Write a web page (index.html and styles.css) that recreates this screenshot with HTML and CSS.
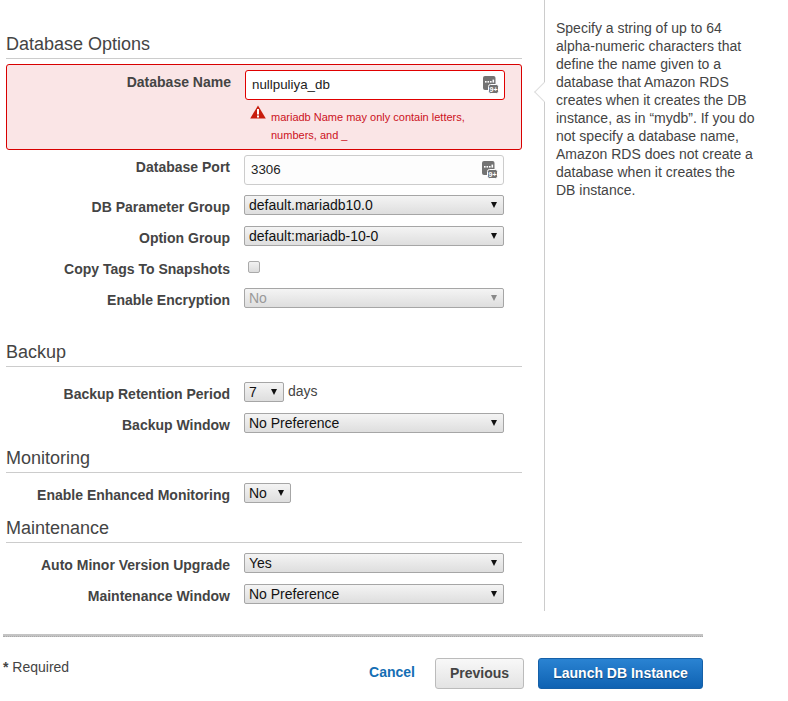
FILE: index.html
```html
<!DOCTYPE html>
<html lang="en">
<head>
    <meta charset="UTF-8">
    <title>Configure Advanced Settings</title>
    <link rel="stylesheet" href="styles.css">
</head>
<body>
    <div class="wizard">
        <div class="form-col">
            <h3 class="section-title">Database Options</h3>
            <div class="row row-error">
                <label class="row-label">Database Name</label>
                <div class="row-field">
                    <div class="text-box text-box-error">
                        <input type="text" class="text-input" value="nullpuliya_db">
                        <svg class="key-icon" width="16" height="18" viewBox="0 0 16 18">
                            <rect x="0" y="0" width="12.5" height="14" rx="2" fill="#737373"/>
                            <rect x="2" y="5" width="1.6" height="1.6" fill="#fff"/>
                            <rect x="4.5" y="5" width="1.6" height="1.6" fill="#fff"/>
                            <rect x="7" y="5" width="1.6" height="1.6" fill="#fff"/>
                            <rect x="9.5" y="3.6" width="1.6" height="3" fill="#fff"/>
                            <rect x="5.5" y="8.5" width="10" height="9" rx="2" fill="#737373" stroke="#fff" stroke-width="1"/>
                            <text x="10.5" y="15.5" font-family="Liberation Sans" font-size="7" font-weight="700" fill="#fff" text-anchor="middle">9+</text>
                        </svg>
                    </div>
                    <div class="error-msg">
                        <svg class="warn-icon" width="16" height="14" viewBox="0 0 16 14">
                            <path d="M8 0.5 L15.8 13.6 L0.2 13.6 Z" fill="#c81c0c"/>
                            <rect x="7" y="4" width="2" height="5.5" fill="#fff"/>
                            <rect x="7" y="10.5" width="2" height="2" fill="#fff"/>
                        </svg>
                        <span>mariadb Name may only contain letters, numbers, and _</span>
                    </div>
                </div>
            </div>
            <div class="row row-port">
                <label class="row-label">Database Port</label>
                <div class="row-field">
                    <div class="text-box">
                        <input type="text" class="text-input" value="3306">
                        <svg class="key-icon" width="16" height="18" viewBox="0 0 16 18">
                            <rect x="0" y="0" width="12.5" height="14" rx="2" fill="#737373"/>
                            <rect x="2" y="5" width="1.6" height="1.6" fill="#fff"/>
                            <rect x="4.5" y="5" width="1.6" height="1.6" fill="#fff"/>
                            <rect x="7" y="5" width="1.6" height="1.6" fill="#fff"/>
                            <rect x="9.5" y="3.6" width="1.6" height="3" fill="#fff"/>
                            <rect x="5.5" y="8.5" width="10" height="9" rx="2" fill="#737373" stroke="#fff" stroke-width="1"/>
                            <text x="10.5" y="15.5" font-family="Liberation Sans" font-size="7" font-weight="700" fill="#fff" text-anchor="middle">9+</text>
                        </svg>
                    </div>
                </div>
            </div>
            <div class="row">
                <label class="row-label">DB Parameter Group</label>
                <div class="pick pick-full"><select><option>default.mariadb10.0</option></select></div>
            </div>
            <div class="row">
                <label class="row-label">Option Group</label>
                <div class="pick pick-full"><select><option>default:mariadb-10-0</option></select></div>
            </div>
            <div class="row">
                <label class="row-label">Copy Tags To Snapshots</label>
                <input type="checkbox" class="check">
            </div>
            <div class="row">
                <label class="row-label">Enable Encryption</label>
                <div class="pick pick-full pick-off"><select disabled><option>No</option></select></div>
            </div>

            <h3 class="section-title section-backup">Backup</h3>
            <div class="row row-tight">
                <label class="row-label">Backup Retention Period</label>
                <div class="pick pick-days"><select><option>7</option></select></div>
                <span class="unit">days</span>
            </div>
            <div class="row">
                <label class="row-label">Backup Window</label>
                <div class="pick pick-full"><select><option>No Preference</option></select></div>
            </div>

            <h3 class="section-title section-next">Monitoring</h3>
            <div class="row row-first">
                <label class="row-label">Enable Enhanced Monitoring</label>
                <div class="pick pick-no"><select><option>No</option></select></div>
            </div>

            <h3 class="section-title section-next">Maintenance</h3>
            <div class="row row-first">
                <label class="row-label">Auto Minor Version Upgrade</label>
                <div class="pick pick-full"><select><option>Yes</option></select></div>
            </div>
            <div class="row">
                <label class="row-label">Maintenance Window</label>
                <div class="pick pick-full"><select><option>No Preference</option></select></div>
            </div>
        </div>
        <div class="help-col">
            <span class="help-notch"></span>
            <p class="help-text">Specify a string of up to 64 alpha-numeric characters that define the name given to a database that Amazon RDS creates when it creates the DB instance, as in “mydb”. If you do not specify a database name, Amazon RDS does not create a database when it creates the DB instance.</p>
        </div>
    </div>

    <div class="footer-rule"></div>
    <div class="footer">
        <div class="required"><b>*</b> Required</div>
        <a class="cancel" href="#">Cancel</a>
        <button class="btn btn-prev">Previous</button>
        <button class="btn btn-launch">Launch DB Instance</button>
    </div>
</body>
</html>
```

FILE: styles.css
```css
body{
    margin: 0;
    font-family: "Liberation Sans", Arial, sans-serif;
    font-size: 14px;
    color: #444;
    background: #fff;
}
.wizard{
    display: flex;
}
.form-col{
    width: 545px;
    padding: 34px 22px 7px 6px;
    box-sizing: border-box;
    border-right: 1px solid #ccc;
}
.section-title{
    margin: 0;
    height: 24px;
    font-size: 18px;
    font-weight: 400;
    line-height: 20px;
    color: #444;
    border-bottom: 1px solid #ccc;
}
.section-backup{
    margin-top: 34px;
}
.section-next{
    margin-top: 15px;
}
.row{
    display: flex;
    gap: 14px;
    margin-bottom: 11px;
}
.row:last-child{
    margin-bottom: 0;
}
.row-label{
    width: 224px;
    flex: none;
    padding-top: 4px;
    line-height: 16px;
    font-weight: 700;
    text-align: right;
    color: #444;
}
.row-error{
    margin: 5px 0 5px;
    height: 86px;
    box-sizing: border-box;
    padding-top: 5px;
    border: 1px solid #d80000;
    border-radius: 3px;
    background: #fae5e6;
}
.row-port{
    margin-bottom: 10px;
}
.row-tight{
    margin-top: 15px;
}
.row-first{
    margin-top: 10px;
}
.row-field{
    width: 260px;
}
.text-box{
    position: relative;
    height: 30px;
}
.text-input{
    display: block;
    width: 100%;
    height: 30px;
    box-sizing: border-box;
    padding: 0 30px 2px 6px;
    font-family: inherit;
    font-size: 13.333px;
    color: #222;
    background: #fdfdfd;
    border: 1px solid #ccc;
    border-radius: 3px;
    outline: none;
}
.text-box-error .text-input{
    background: #fff;
    border-color: #e00000;
}
.key-icon{
    position: absolute;
    top: 6px;
    right: 6px;
}
.error-msg{
    display: flex;
    gap: 5px;
    margin-top: 5px;
    padding-left: 5px;
    font-size: 11px;
    line-height: 18px;
    color: #cc1122;
}
.warn-icon{
    flex: none;
}
.error-msg span{
    margin-top: 3px;
}
.pick{
    position: relative;
    height: 20px;
}
.pick select{
    display: block;
    width: 100%;
    height: 20px;
    box-sizing: border-box;
    padding: 0 0 0 4px;
    font-family: inherit;
    font-size: 14px;
    color: #111;
    appearance: none;
    background: linear-gradient(#f4f4f4, #dedede);
    border: 1px solid #a6a6a6;
    border-radius: 2px;
    outline: none;
}
.pick::after{
    content: "";
    position: absolute;
    top: 7px;
    right: 7px;
    border-left: 3px solid transparent;
    border-right: 3px solid transparent;
    border-top: 6px solid #111;
    pointer-events: none;
}
.pick-full{
    width: 260px;
}
.pick-days{
    width: 40px;
}
.pick-no{
    width: 47px;
}
.pick-off select{
    color: #999;
    opacity: 1;
}
.pick-off::after{
    border-top-color: #888;
}
.check{
    width: 12px;
    height: 12px;
    margin: 4px 0 4px 4px;
    appearance: none;
    background: linear-gradient(#f2f2f2, #dcdcdc);
    border: 1px solid #aaa;
    border-radius: 2px;
}
.unit{
    margin-left: -10px;
    line-height: 18px;
}
.help-col{
    position: relative;
    flex: none;
    padding-left: 11px;
    width: 214px;
}
.help-notch{
    position: absolute;
    top: 85px;
    left: -8px;
    width: 14px;
    height: 14px;
    box-sizing: border-box;
    transform: rotate(45deg);
    background: #fff;
    border-left: 1px solid #ddd;
    border-bottom: 1px solid #ddd;
}
.help-text{
    position: relative;
    width: 202px;
    margin: 19px 0 0;
    line-height: 18px;
}
.footer-rule{
    width: 700px;
    height: 2px;
    margin: 23px 0 0 3px;
    background: #c4c4c4;
    border-bottom: 1px dotted #aaa;
}
.footer{
    display: flex;
    align-items: flex-start;
    width: 700px;
    margin: 21px 0 0 3px;
}
.required{
    margin-right: auto;
    line-height: 18px;
}
.cancel{
    margin: 6px 20px 0 0;
    line-height: 16px;
    font-weight: 700;
    color: #146eb4;
    text-decoration: none;
}
.btn{
    height: 31px;
    box-sizing: border-box;
    padding: 0 0 2px;
    font-family: inherit;
    font-size: 14px;
    font-weight: 700;
    border-radius: 3px;
}
.btn-prev{
    width: 89px;
    margin-right: 14px;
    color: #444;
    background: linear-gradient(#f8f8f8, #e3e3e3);
    border: 1px solid #bbb;
}
.btn-launch{
    width: 165px;
    color: #fff;
    text-shadow: 0 1px 1px rgba(0, 0, 0, 0.4);
    background: linear-gradient(#2a83d2, #0f62b2);
    border: 1px solid #1560a8;
}
```
